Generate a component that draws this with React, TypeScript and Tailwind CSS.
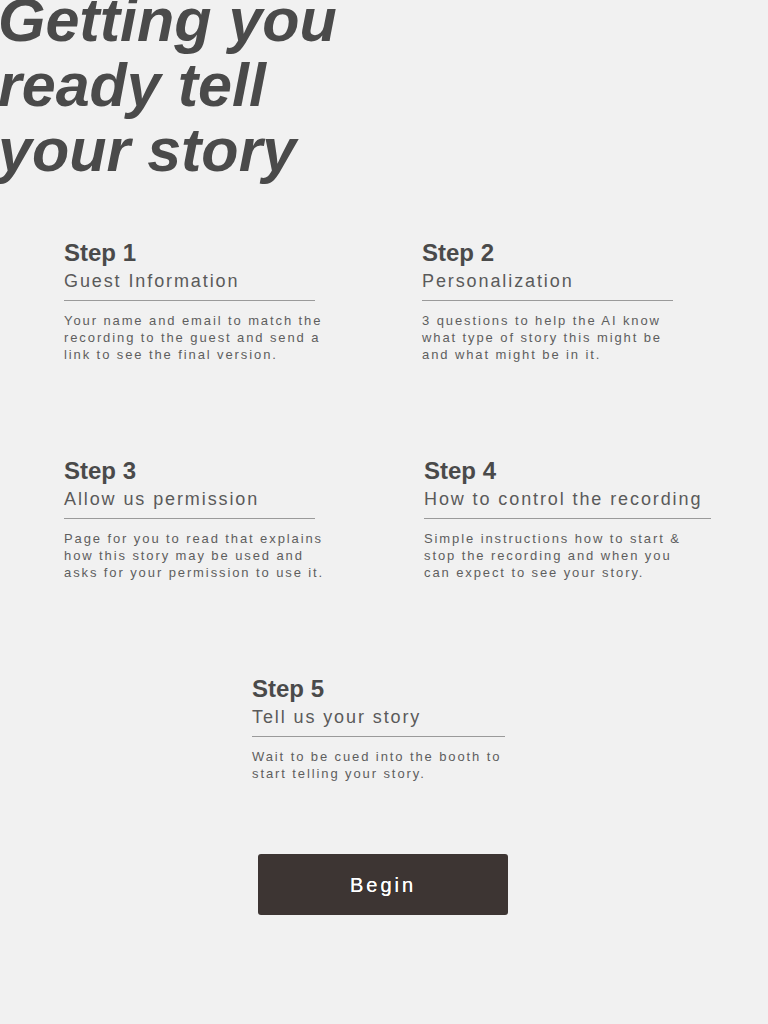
import React from 'react';

interface Step {
  n: number;
  title: string;
  text: string;
  lineWidth: string;
}

const steps: Step[] = [
  {
    n: 1,
    title: 'Guest Information',
    text: 'Your name and email to match the recording to the guest and send a link to see the final version.',
    lineWidth: 'w-[251px]',
  },
  {
    n: 2,
    title: 'Personalization',
    text: '3 questions to help the AI know what type of story this might be and what might be in it.',
    lineWidth: 'w-[251px]',
  },
  {
    n: 3,
    title: 'Allow us permission',
    text: 'Page for you to read that explains how this story may be used and asks for your permission to use it.',
    lineWidth: 'w-[251px]',
  },
  {
    n: 4,
    title: 'How to control the recording',
    text: 'Simple instructions how to start & stop the recording and when you can expect to see your story.',
    lineWidth: 'w-[287px]',
  },
  {
    n: 5,
    title: 'Tell us your story',
    text: 'Wait to be cued into the booth to start telling your story.',
    lineWidth: 'w-[253px]',
  },
];

const StepCard: React.FC<{ step: Step; className?: string }> = ({ step, className = '' }) => (
  <div className={`flex flex-col ${className}`}>
    <h2 className="text-[24px] leading-[28px] font-bold text-[#4a4a4a]">Step {step.n}</h2>
    <p className="mt-[2px] text-[18px] leading-[24px] tracking-[1.9px] text-[#5a5a5a]">{step.title}</p>
    <div className={`mt-[7px] h-px bg-[#9a9a9a] ${step.lineWidth}`} />
    <p className="mt-[11px] w-[266px] text-[13px] leading-[17px] tracking-[1.9px] text-[#5e5e5e]">{step.text}</p>
  </div>
);

export default function App() {
  return (
    <div className="min-h-screen w-full bg-[#f1f1f1] font-['Liberation_Sans',Arial,sans-serif] overflow-hidden">
      <h1 className="-mt-[12px] -ml-[2px] text-[61px] leading-[65px] font-bold italic text-[#4a4a4a]">
        Getting you
        <br />
        ready tell
        <br />
        your story
      </h1>

      <div className="mt-[56px] flex flex-col gap-[94px] pl-[64px]">
        <div className="grid grid-cols-[358px_1fr]">
          <StepCard step={steps[0]} />
          <StepCard step={steps[1]} />
        </div>
        <div className="grid grid-cols-[360px_1fr]">
          <StepCard step={steps[2]} />
          <StepCard step={steps[3]} />
        </div>
        <div className="pl-[188px]">
          <StepCard step={steps[4]} />
        </div>
      </div>

      <div className="mt-[72px] pl-[258px]">
        <button className="h-[61px] w-[250px] rounded-[3px] bg-[#3d3533] text-[20px] font-medium tracking-[3px] text-white [text-shadow:0_0_0.4px_#fff]">
          Begin
        </button>
      </div>
    </div>
  );
}
